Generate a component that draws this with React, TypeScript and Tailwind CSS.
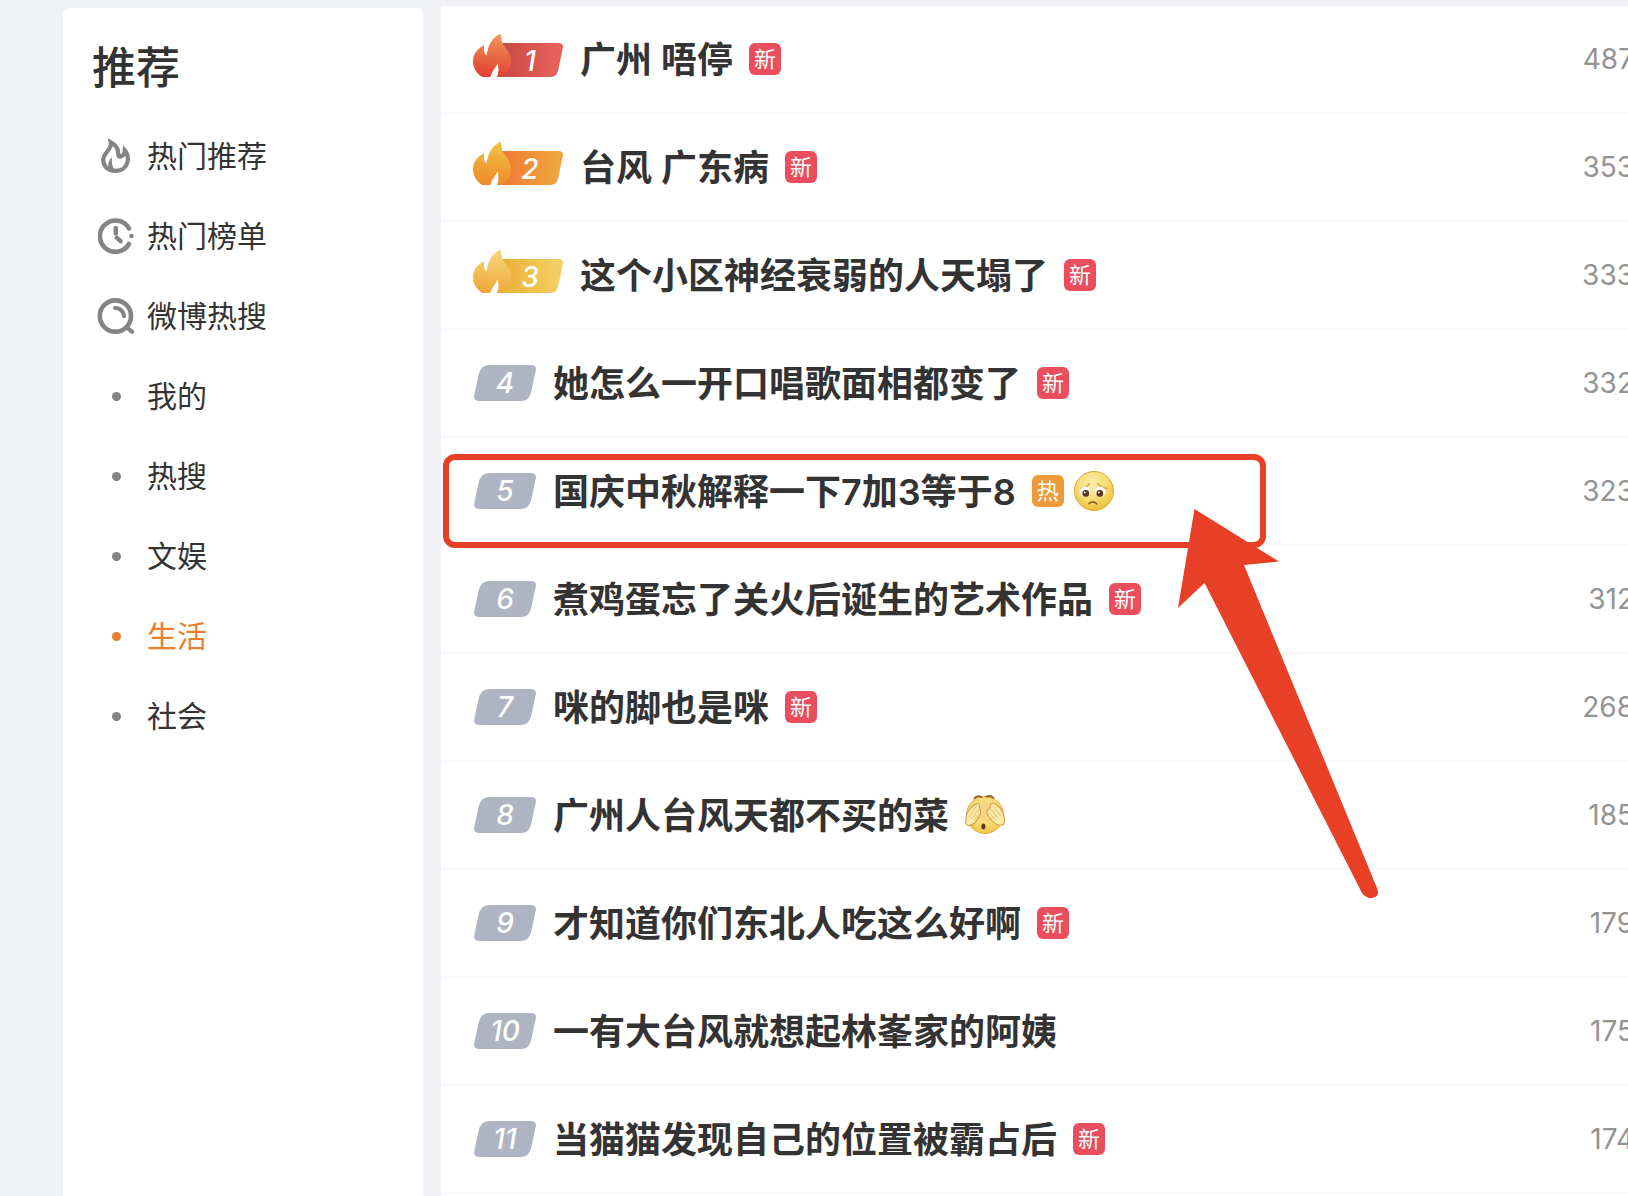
import clsx from 'clsx';
import React, { useId } from 'react';

type Mark = 'new' | 'hot' | 'worried' | 'shy';

type Topic = {
  rank: number;
  title: string;
  count: string;
  marks: Mark[];
  highlighted?: boolean;
};

const topics: Topic[] = [
  { rank: 1, title: '广州 唔停', count: '487', marks: ['new'] },
  { rank: 2, title: '台风 广东病', count: '353', marks: ['new'] },
  { rank: 3, title: '这个小区神经衰弱的人天塌了', count: '333', marks: ['new'] },
  { rank: 4, title: '她怎么一开口唱歌面相都变了', count: '332', marks: ['new'] },
  { rank: 5, title: '国庆中秋解释一下7加3等于8', count: '323', marks: ['hot', 'worried'], highlighted: true },
  { rank: 6, title: '煮鸡蛋忘了关火后诞生的艺术作品', count: '312', marks: ['new'] },
  { rank: 7, title: '咪的脚也是咪', count: '268', marks: ['new'] },
  { rank: 8, title: '广州人台风天都不买的菜', count: '185', marks: ['shy'] },
  { rank: 9, title: '才知道你们东北人吃这么好啊', count: '179', marks: ['new'] },
  { rank: 10, title: '一有大台风就想起林峯家的阿姨', count: '175', marks: [] },
  { rank: 11, title: '当猫猫发现自己的位置被霸占后', count: '174', marks: ['new'] },
];

const flameColors = [
  { flame: ['#f0965a', '#e2402f'], bar: ['#c94a45', '#e8605c'] },
  { flame: ['#f3c142', '#ee8a2c'], bar: ['#ee7a34', '#f0a63c'] },
  { flame: ['#f5d67a', '#eda83a'], bar: ['#ecb136', '#f2cf62'] },
];

function FlameIcon() {
  return (
    <svg viewBox="0 0 36 36" className="size-9" fill="none" aria-hidden="true">
      <path
        d="M12.8 4.2C17 6.6 20.4 9.4 20.2 15C20.2 17.6 20.4 18.8 22.2 18.6C25 18.2 26.6 16 26.8 12.4C29.4 15.4 30.2 18 29.8 22.2C29 28.6 24.2 32.8 17.4 32.8C10 32.8 5.2 28.6 5.2 21.8C5.2 14.4 14.4 12.2 12.8 4.2Z"
        stroke="#848484"
        strokeWidth="4.2"
      />
      <path d="M14 19.2C10.4 22 9.2 27.4 11.4 32L17.4 33C14.2 29 13.4 24.6 14 19.2Z" fill="#848484" />
    </svg>
  );
}

function ClockIcon() {
  return (
    <svg viewBox="0 0 36 36" className="size-9" fill="none" stroke="#848484" strokeLinecap="round" aria-hidden="true">
      <path d="M31 10.4A15.6 15.6 0 1 0 31 26" strokeWidth="4.6" />
      <path d="M17.8 10V15.4M18.8 19.8L22.6 23.2" strokeWidth="4.4" />
      <circle cx="33.4" cy="18" r="2.2" fill="#848484" stroke="none" />
    </svg>
  );
}

function SearchIcon() {
  return (
    <svg viewBox="0 0 38 36" className="h-9 w-[38px]" fill="none" stroke="#848484" strokeLinecap="round" aria-hidden="true">
      <circle cx="18.4" cy="18" r="15.6" strokeWidth="4.6" />
      <path d="M30 29.6L35 33.6" strokeWidth="4.4" />
      <path d="M18.2 10C23 9.8 26.6 13.4 27 18.2" strokeWidth="4.2" />
    </svg>
  );
}

function WorriedFace() {
  const id = useId();
  return (
    <svg viewBox="0 0 40 40" className="size-10 shrink-0" role="img" aria-label="委屈">
      <defs>
        <radialGradient id={id} cx="0.45" cy="0.32" r="0.7">
          <stop offset="0" stopColor="#fbeeb0" />
          <stop offset="0.55" stopColor="#f7dd70" />
          <stop offset="1" stopColor="#eabd35" />
        </radialGradient>
      </defs>
      <circle cx="20" cy="20" r="19.5" fill={`url(#${id})`} stroke="#d6ab3e" />
      <path d="M6.5 17.5C10 17 13.5 15.5 15.5 12.5M33 17.5C29 17 25.5 15.5 23.8 12.5" fill="none" stroke="#d3aa4e" strokeWidth="1.6" strokeLinecap="round" />
      <circle cx="11.2" cy="20.8" r="5.4" fill="#fffdf5" />
      <circle cx="26" cy="20.8" r="5.4" fill="#fffdf5" />
      <circle cx="11.8" cy="22.4" r="3.4" fill="#5b3a20" />
      <circle cx="25.8" cy="22.4" r="3.4" fill="#5b3a20" />
      <circle cx="10.8" cy="21.4" r="0.9" fill="#fff" />
      <circle cx="24.8" cy="21.4" r="0.9" fill="#fff" />
      <path d="M15 32.8C16.4 30.6 20.8 30.4 22.8 33" fill="none" stroke="#7a5226" strokeWidth="1.5" strokeLinecap="round" />
    </svg>
  );
}

function ShyFace() {
  const id = useId();
  return (
    <svg viewBox="0 0 40 40" className="size-10 shrink-0" role="img" aria-label="捂脸">
      <defs>
        <radialGradient id={id} cx="0.5" cy="0.4" r="0.65">
          <stop offset="0" stopColor="#f7cf90" />
          <stop offset="0.5" stopColor="#f9dc7c" />
          <stop offset="1" stopColor="#efc23c" />
        </radialGradient>
      </defs>
      <circle cx="20" cy="20" r="18.5" fill={`url(#${id})`} stroke="#dfb246" />
      <path d="M9.5 3.2C11.5 1.2 14.5 1 16.5 2M21.5 1.6C24 0.6 27 1.4 28.5 3" fill="none" stroke="#8a6634" strokeWidth="1.8" strokeLinecap="round" />
      <path
        d="M0.8 28.4C0.2 21.5 2.2 16.5 6 12.8C8.2 10.4 11.6 8 13.6 8.8C15.4 9.4 14.2 11.8 14.8 14.2C16.6 16.6 16 19.4 13.6 22.6C11.4 26.4 8 30.4 4.2 30.4C2.4 30.6 1.2 29.8 0.8 28.4Z"
        fill="#fae9a8"
        stroke="#d2a24c"
        strokeWidth="1.1"
      />
      <path
        d="M39.4 27.4C40 21 37.8 15.6 34.2 12C31.6 9.4 27.6 7.4 25.8 8.8C24.4 10 26 11.6 24.8 13.8C20.8 14.4 21 18.6 24 22C26.6 25.8 30.8 30 35 30.2C37.6 30.2 39 29.2 39.4 27.4Z"
        fill="#fae9a8"
        stroke="#d2a24c"
        strokeWidth="1.1"
      />
      <path
        d="M4.4 21.6L11.4 11M7.2 23.2L13.4 14.4M9.6 25L14.2 18.6M35.6 21L28 11.2M32.8 23L26.4 14.6M30.4 25L24.8 18.4"
        stroke="#e0bd6a"
        strokeWidth="0.9"
        strokeLinecap="round"
      />
      <ellipse cx="18.4" cy="31.6" rx="2" ry="3" fill="#63371c" />
    </svg>
  );
}

function FlameBadge({ rank }: { rank: number }) {
  const id = useId();
  const { flame, bar } = flameColors[rank - 1];
  return (
    <span className="relative flex h-[50px] w-[90px] shrink-0 items-center justify-center pt-1 pl-[24px]">
      <svg viewBox="0 0 90 50" className="absolute inset-0" aria-hidden="true">
        <defs>
          <linearGradient id={`${id}f`} x1="0.6" y1="0" x2="0.5" y2="1">
            <stop offset="0" stopColor={flame[0]} />
            <stop offset="1" stopColor={flame[1]} />
          </linearGradient>
          <linearGradient id={`${id}b`} x1="0.1" y1="0" x2="0.9" y2="0">
            <stop offset="0" stopColor={bar[0]} />
            <stop offset="1" stopColor={bar[1]} />
          </linearGradient>
        </defs>
        <path d="M26 9H85.5Q90.8 9 89.8 14L85 37Q83.4 43 77 43H24Z" fill={`url(#${id}b)`} />
        <path
          d="M27 0C29.2 0.6 27.4 6.6 30.8 11.4C34.6 16.6 38.4 21 38 28C37.6 35 32.8 41 25.8 43H24C25.6 38.4 25.6 34 24.6 29.4C23.2 32.6 22.2 33.6 20.6 36C19 38.4 18.4 40.4 17.4 43H9.2C3.2 39.2 0 33.4 0 27C0 19.6 4.8 14.4 11 11.2C11 15.4 10.4 18.6 13.4 21.6C15.4 12.8 17 5 27 0Z"
          fill={`url(#${id}f)`}
        />
        <path d="M24.6 29.4C26 34 25.8 38.6 24 43H17.4C18.4 39 21.4 36.6 24.6 29.4Z" fill="#fff" />
      </svg>
      <span className="relative text-[28px] leading-none font-medium text-white italic">{rank}</span>
    </span>
  );
}

function RankBadge({ rank }: { rank: number }) {
  return (
    <span className="relative ml-px flex h-9 w-[62px] shrink-0 items-center justify-center">
      <svg viewBox="0 0 62 36" className="absolute inset-0" aria-hidden="true">
        <path d="M15 0H57Q62.6 0 61.8 5.4L57.4 26Q55.4 36 47 36H5Q-0.6 36 0.2 30.6L4.6 10Q6.8 0 15 0Z" fill="#afb4c3" />
      </svg>
      <span className="relative text-[28px] leading-none font-medium text-white italic">{rank}</span>
    </span>
  );
}

function TopicMark({ mark }: { mark: Mark }) {
  if (mark === 'worried') return <WorriedFace />;
  if (mark === 'shy') return <ShyFace />;
  return (
    <span
      className={clsx(
        'flex size-8 shrink-0 items-center justify-center rounded-md text-[22px] leading-none text-white',
        mark === 'new' ? 'bg-[#ea4d5b]' : 'bg-[#ee9a3a]'
      )}
    >
      {mark === 'new' ? '新' : '热'}
    </span>
  );
}

// Red frame and pointer drawn over the highlighted topic
function Annotation() {
  return (
    <>
      <div className="pointer-events-none absolute top-4 left-[2px] z-10 h-[94px] w-[823px] rounded-xl border-[6px] border-[#e84026]" />
      <svg
        viewBox="0 0 204 392"
        className="pointer-events-none absolute top-[70px] left-[736px] z-10 h-[392px] w-[204px]"
        aria-hidden="true"
      >
        <path d="M17.5 1L102 53.5L67 57L200 380Q203 387 197 389.5Q190 391.5 185 385L27.5 75L1 100Z" fill="#e84026" />
      </svg>
    </>
  );
}

function TopicRow({ topic }: { topic: Topic }) {
  return (
    <li className="relative flex h-[108px] items-center border-b-2 border-[#f8f8f9] pl-8">
      {topic.rank <= 3 ? <FlameBadge rank={topic.rank} /> : <RankBadge rank={topic.rank} />}
      <a href="#" className="ml-[17px] pt-[2px] text-[36px] leading-none font-semibold whitespace-nowrap text-[#333]">
        {topic.title}
      </a>
      <div className="ml-4 flex items-center gap-[10px]">
        {topic.marks.map((mark) => (
          <TopicMark key={mark} mark={mark} />
        ))}
      </div>
      <span className="-mr-[6px] ml-auto text-[28px] leading-none text-[#939393]">{topic.count}</span>
      {topic.highlighted && <Annotation />}
    </li>
  );
}

const navItems = [
  { label: '热门推荐', icon: <FlameIcon /> },
  { label: '热门榜单', icon: <ClockIcon /> },
  { label: '微博热搜', icon: <SearchIcon /> },
  { label: '我的' },
  { label: '热搜' },
  { label: '文娱' },
  { label: '生活', active: true },
  { label: '社会' },
];

function Sidebar() {
  return (
    <nav className="mt-[2px] w-[360px] shrink-0 rounded-t-md bg-white px-[29px] pt-[35px]">
      <h2 className="text-[44px] leading-[50px] font-medium text-[#333]">推荐</h2>
      <ul className="mt-[23px]">
        {navItems.map(({ label, icon, active }) => (
          <li key={label}>
            <a
              href="#"
              className={clsx('flex h-20 items-center text-[30px] leading-none', active ? 'text-[#eb7f2d]' : 'text-[#333]')}
            >
              <span className="mr-[7px] flex w-12 items-center justify-center">
                {icon ?? <span className={clsx('size-[9px] rounded-full', active ? 'bg-[#eb7f2d]' : 'bg-[#848484]')} />}
              </span>
              {label}
            </a>
          </li>
        ))}
      </ul>
    </nav>
  );
}

function App() {
  return (
    <div className="flex min-h-screen gap-[18px] overflow-hidden bg-[#f0f1f5] pt-[6px] pl-[63px] font-['Inter','Noto_Sans_CJK_SC',sans-serif]">
      <Sidebar />
      <main className="min-w-0 flex-1 overflow-hidden bg-white">
        <ol>
          {topics.map((topic) => (
            <TopicRow key={topic.rank} topic={topic} />
          ))}
        </ol>
      </main>
    </div>
  );
}

export default App;
